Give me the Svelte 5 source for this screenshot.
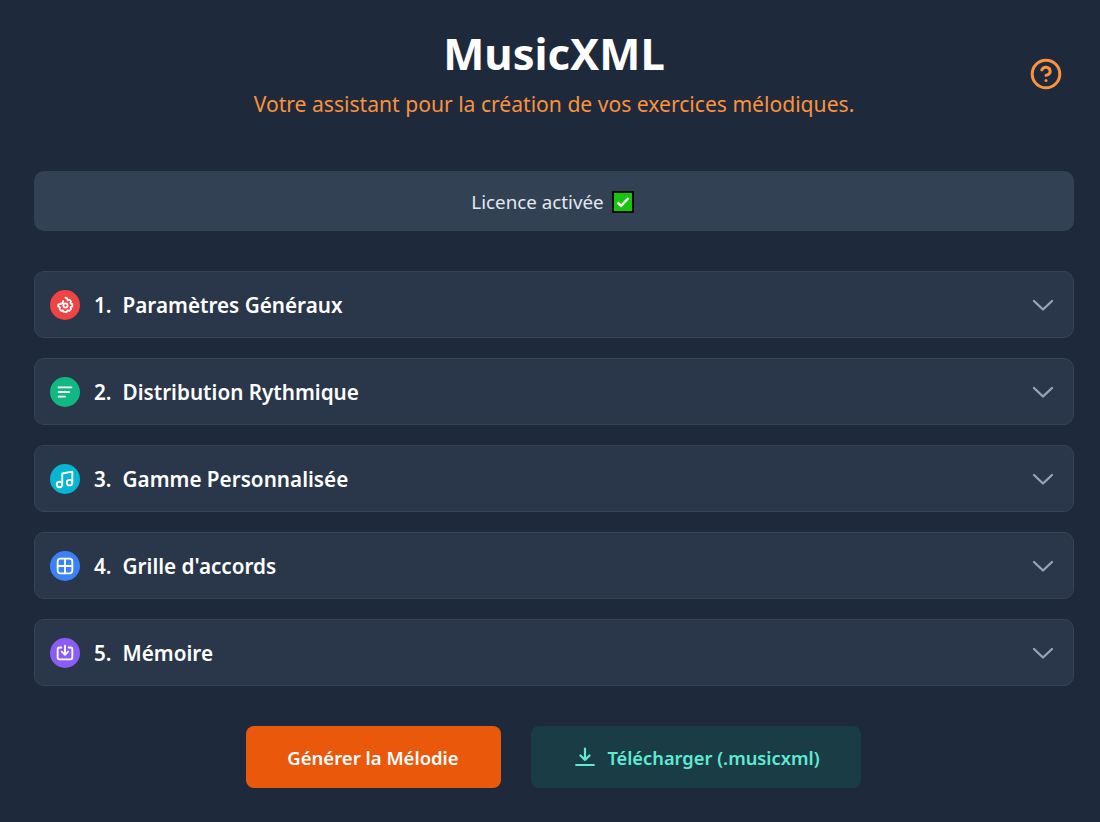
<script>
  const sections = [
    { n: '1.', title: 'Paramètres Généraux', color: '#ef4444', icon: 'gear' },
    { n: '2.', title: 'Distribution Rythmique', color: '#10b981', icon: 'lines' },
    { n: '3.', title: 'Gamme Personnalisée', color: '#06b6d4', icon: 'music' },
    { n: '4.', title: "Grille d'accords", color: '#3b82f6', icon: 'grid' },
    { n: '5.', title: 'Mémoire', color: '#8b5cf6', icon: 'save' }
  ];
</script>

<main class="page">
  <header class="head">
    <h1>MusicXML</h1>
    <p>Votre assistant pour la création de vos exercices mélodiques.</p>
    <button class="help" aria-label="Aide">
      <svg viewBox="0 0 24 24" width="36" height="36" fill="none" stroke="currentColor" stroke-width="2" stroke-linecap="round" stroke-linejoin="round">
        <circle cx="12" cy="12" r="9.200"/>
        <path d="M9.200 9.300a2.900 2.900 0 0 1 5.600 1c0 1.900-2.800 2.600-2.800 2.600"/>
        <path d="M12 16.400h.01"/>
      </svg>
    </button>
  </header>

  <div class="licence">
    <span>Licence activée</span>
    <svg class="check" viewBox="0 0 22 22" width="22" height="22">
      <rect x="1" y="1" width="20" height="20" fill="#16c60c" stroke="#0b0b0b" stroke-width="2"/>
      <path d="M5.500 11.500l3.700 3.400L16.500 7" fill="none" stroke="#fff" stroke-width="2.400"/>
    </svg>
  </div>

  <div class="sections">
    {#each sections as s}
      <section class="card">
        <span class="badge" style="background:{s.color}">
          <svg viewBox="0 0 24 24" width="22" height="22" fill="none" stroke="#fff" stroke-width="2" stroke-linecap="round" stroke-linejoin="round">
            {#if s.icon === 'gear'}
              <path d="M12.500 4l2 1 .5 2 2-.5 1.500 1.500-.5 2 2 1v2.500l-2 1 .5 2-1.800 1.800-2-.5-1 2h-2.700l-1-1.800-2 .3-1.800-1.800.4-2-1.900-1v-2.200l3-.5"/>
              <circle cx="12.500" cy="12.500" r="2.300"/>
              <path d="M7 10.500l2.500-.5.500-2.500"/>
            {:else if s.icon === 'lines'}
              <path d="M5 7h14M5 12h11.500M5 17h7"/>
            {:else if s.icon === 'music'}
              <path d="M9 18V6l11-2v12"/>
              <circle cx="6" cy="18" r="3"/>
              <circle cx="17" cy="16" r="3"/>
            {:else if s.icon === 'grid'}
              <rect x="4" y="4" width="16" height="16" rx="3"/>
              <path d="M12 4v16M4 12h16"/>
            {:else}
              <path d="M8 6H6a2 2 0 0 0-2 2v9a2 2 0 0 0 2 2h12a2 2 0 0 0 2-2V8a2 2 0 0 0-2-2h-2"/>
              <path d="M12 4v10M8.500 10.500l3.500 3.500 3.500-3.500"/>
            {/if}
          </svg>
        </span>
        <h2><span class="num">{s.n}</span>{s.title}</h2>
        <svg class="chev" viewBox="0 0 24 24" width="24" height="24" fill="none" stroke="currentColor" stroke-width="2.400" stroke-linecap="round" stroke-linejoin="round">
          <path d="M3 8l9 8.500 9-8.500"/>
        </svg>
      </section>
    {/each}
  </div>

  <div class="actions">
    <button class="primary">Générer la Mélodie</button>
    <button class="secondary">
      <svg viewBox="0 0 20 20" width="20" height="20" fill="none" stroke="currentColor" stroke-width="2.200" stroke-linecap="round" stroke-linejoin="round">
        <path d="M10 1.500v11.500M5.500 8.500l4.500 4.500 4.500-4.500M1.200 18h17.600"/>
      </svg>
      Télécharger (.musicxml)
    </button>
  </div>
</main>

<style>
  :global(body) {
    margin: 0;
    background: #1e293b;
    font-family: "Noto Sans", "Open Sans", sans-serif;
  }
  .page {
    box-sizing: border-box;
    width: 1040px;
    margin-left: 34px;
    height: 822px;
    padding-top: 24px;
  }
  .head {
    position: relative;
    text-align: center;
    height: 147px;
  }
  h1 {
    margin: 0;
    color: #fff;
    font-size: 43.600px;
    line-height: 58px;
    font-weight: 700;
  }
  .head p {
    margin: 0;
    color: #fb923c;
    font-size: 21.100px;
    line-height: 28px;
    margin-top: 8px;
  }
  .help {
    position: absolute;
    top: 32px;
    right: 10px;
    width: 36px;
    height: 36px;
    padding: 0;
    border: 0;
    background: none;
    color: #fb923c;
  }
  .help svg { display: block; }
  .licence {
    box-sizing: border-box;
    height: 60px;
    background: #334155;
    border-radius: 10px;
    display: flex;
    align-items: center;
    justify-content: center;
    gap: 8px;
    color: #e2e8f0;
    font-size: 18.800px;
    padding: 2px 3px 0 0;
  }
  .check { display: block; }
  .sections {
    margin-top: 40px;
    display: flex;
    flex-direction: column;
    gap: 20px;
  }
  .card {
    box-sizing: border-box;
    height: 67px;
    background: #2a3649;
    border: 1px solid #364358;
    border-radius: 10px;
    display: flex;
    align-items: center;
    padding: 0 18px 0 15px;
  }
  .badge {
    width: 30px;
    height: 30px;
    border-radius: 50%;
    display: flex;
    align-items: center;
    justify-content: center;
    flex: none;
  }
  .badge svg { display: block; }
  h2 {
    margin: 0 0 0 14px;
    flex: 1;
    color: #fff;
    font-size: 20.700px;
    font-weight: 600;
    line-height: 28px;
  }
  .num { margin-right: 11px; }
  .chev { color: #94a3b8; display: block; margin-top: 1px; }
  .actions {
    margin-top: 40px;
    display: flex;
    justify-content: center;
    gap: 30px;
    padding-right: 2px;
  }
  .actions button {
    height: 62px;
    border: 0;
    border-radius: 8px;
    font-family: inherit;
    font-size: 18.500px;
    font-weight: 600;
    display: flex;
    align-items: center;
    justify-content: center;
  }
  .primary {
    width: 255px;
    background: #ea580c;
    color: #fff;
  }
  .actions .secondary {
    width: 330px;
    gap: 12px;
    padding: 0 0 0 4px;
    font-size: 18.300px;
    background: #1a3c45;
    color: #5eead4;
  }
</style>
